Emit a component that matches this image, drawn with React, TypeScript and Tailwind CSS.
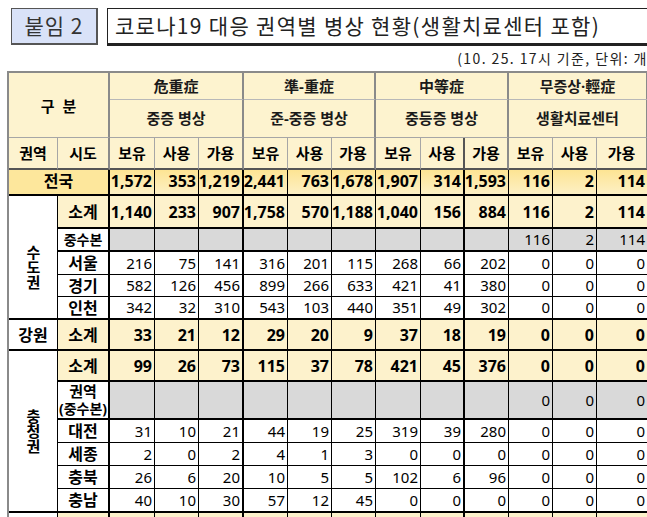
import React from 'react';

type Row = {
  label: string;
  values: string[];
  kind: 'sub' | 'hq' | 'plain';
  bottom: 'thin' | 'thick';
};

const SANS = "font-['Noto_Sans','Noto_Sans_CJK_KR',sans-serif]";

// 보유/사용/가용 x 4 groups; thick right edge after 危重症 가용 and 中等症 사용
const thickRight = (i: number) => i === 2 || i === 7;

function NumCell({ v, i, kind, bottom }: { v: string; i: number; kind: Row['kind']; bottom: Row['bottom'] }) {
  const bg = kind === 'sub' ? 'bg-[#fdf2cc]' : kind === 'hq' ? 'bg-[#d9d9d9]' : 'bg-white';
  return (
    <div
      className={[
        'flex items-center justify-end border-black pr-[2px]',
        bg,
        thickRight(i) ? 'border-r-2' : 'border-r',
        bottom === 'thick' ? 'border-b-2' : 'border-b',
        kind === 'sub' ? 'text-[16px] font-bold' : 'text-[15px]',
      ].join(' ')}
    >
      {v}
    </div>
  );
}

function LabelCell({ children, kind, bottom }: { children: React.ReactNode; kind: Row['kind']; bottom: Row['bottom'] }) {
  return (
    <div
      className={[
        'flex flex-col items-center justify-center border-r-2 border-black text-center font-bold',
        kind === 'sub' ? 'bg-[#fdf2cc]' : 'bg-white',
        kind === 'hq' ? 'leading-[18px]' : 'text-[16px]',
        bottom === 'thick' ? 'border-b-2' : 'border-b',
      ].join(' ')}
    >
      {children}
    </div>
  );
}

function Rows({ rows }: { rows: Row[] }) {
  return (
    <>
      {rows.map((r, ri) => (
        <React.Fragment key={ri}>
          <LabelCell kind={r.kind} bottom={r.bottom}>
            {r.label.split('\n').map((l, k) => (
              <span
                key={k}
                className={r.kind === 'hq' ? (l.startsWith('(') || l === '중수본' ? 'text-[14px] whitespace-nowrap' : 'text-[15px]') : ''}
              >
                {l}
              </span>
            ))}
          </LabelCell>
          {r.values.map((v, i) => (
            <NumCell key={i} v={v} i={i} kind={r.kind} bottom={r.bottom} />
          ))}
        </React.Fragment>
      ))}
    </>
  );
}

const blank9 = ['', '', '', '', '', '', '', '', ''];

const capital: Row[] = [
  { label: '소계', kind: 'sub', bottom: 'thick', values: ['1,140', '233', '907', '1,758', '570', '1,188', '1,040', '156', '884', '116', '2', '114'] },
  { label: '중수본', kind: 'hq', bottom: 'thick', values: [...blank9, '116', '2', '114'] },
  { label: '서울', kind: 'plain', bottom: 'thin', values: ['216', '75', '141', '316', '201', '115', '268', '66', '202', '0', '0', '0'] },
  { label: '경기', kind: 'plain', bottom: 'thin', values: ['582', '126', '456', '899', '266', '633', '421', '41', '380', '0', '0', '0'] },
  { label: '인천', kind: 'plain', bottom: 'thick', values: ['342', '32', '310', '543', '103', '440', '351', '49', '302', '0', '0', '0'] },
];

const gangwon: Row[] = [
  { label: '소계', kind: 'sub', bottom: 'thick', values: ['33', '21', '12', '29', '20', '9', '37', '18', '19', '0', '0', '0'] },
];

const chungcheong: Row[] = [
  { label: '소계', kind: 'sub', bottom: 'thick', values: ['99', '26', '73', '115', '37', '78', '421', '45', '376', '0', '0', '0'] },
  { label: '권역\n(중수본)', kind: 'hq', bottom: 'thick', values: [...blank9, '0', '0', '0'] },
  { label: '대전', kind: 'plain', bottom: 'thin', values: ['31', '10', '21', '44', '19', '25', '319', '39', '280', '0', '0', '0'] },
  { label: '세종', kind: 'plain', bottom: 'thin', values: ['2', '0', '2', '4', '1', '3', '0', '0', '0', '0', '0', '0'] },
  { label: '충북', kind: 'plain', bottom: 'thin', values: ['26', '6', '20', '10', '5', '5', '102', '6', '96', '0', '0', '0'] },
  { label: '충남', kind: 'plain', bottom: 'thick', values: ['40', '10', '30', '57', '12', '45', '0', '0', '0', '0', '0', '0'] },
];

const total = ['1,572', '353', '1,219', '2,441', '763', '1,678', '1,907', '314', '1,593', '116', '2', '114'];

const groups = [
  { hanja: '危重症', ko: '중증 병상' },
  { hanja: '準-重症', ko: '준-중증 병상' },
  { hanja: '中等症', ko: '중등증 병상' },
  { hanja: '무증상·輕症', ko: '생활치료센터' },
];

// region name written top-to-bottom, one syllable per line
function Vertical({ text }: { text: string }) {
  return (
    <span className="text-[15px] leading-[20px] font-['Noto_Sans_CJK_KR',sans-serif] [text-orientation:upright] [writing-mode:vertical-lr]">
      {text}
    </span>
  );
}

export default function App() {
  return (
    <div className={`h-[517px] w-[647px] overflow-hidden bg-white text-black ${SANS}`}>
      {/* title */}
      <div className="flex gap-[9px] pl-[11px] pt-[8px]">
        <div className="flex h-[37px] w-[87px] items-center justify-center border border-[#555] border-b-2 border-r-2 bg-[#d9e2f8] text-[21px] tracking-[1px] text-[#333] font-['Noto_Sans_CJK_KR',sans-serif]">
          붙임 2
        </div>
        <div className="mr-[-30px] flex h-[38px] flex-1 items-center border border-b-[3px] border-[#222] pl-[7px] text-[21px] tracking-[1.3px] whitespace-nowrap text-[#222] font-['Noto_Sans_CJK_KR',sans-serif]">
          코로나19 대응 권역별 병상 현황(생활치료센터 포함)
        </div>
      </div>
      <div className="mr-[-7px] mt-[2px] flex h-[20px] items-center justify-end whitespace-nowrap text-[14px] tracking-[1.4px] text-[#222] font-['Noto_Sans_CJK_KR',sans-serif]">
        (10. 25. 17시 기준, 단위: 개)
      </div>

      {/* table */}
      <div className="ml-[7px] mt-[3px] w-[641px] border-l-2 border-t-2 border-[#8a8a8a]">
        <div className="grid grid-cols-[49px_52px_45px_44px_45px_44px_44px_44px_45px_44px_44px_44px_44px_51px] grid-rows-[27px_38px_32px_26px_33px_23px_23px_22px_23px_31px_31px_38px_23px_23px_23px_24px_32px]">
          {/* header row 1-2 */}
          <div className="col-span-2 row-span-2 flex items-center justify-center gap-[8px] border-b border-r-2 border-b-[#a6a6a6] border-r-[#8a8a8a] bg-[#fdf3cf] pt-[2px] text-[15px] font-bold">
            <span>구</span>
            <span>분</span>
          </div>
          {groups.map((g) => (
            <div
              key={g.hanja}
              className="col-span-3 flex items-center justify-center border-b border-r-2 border-b-[#b8b8b8] border-r-[#8a8a8a] bg-[#fdf3cf] text-[15px] font-bold text-[#1a1a1a]"
            >
              {g.hanja}
            </div>
          ))}
          {groups.map((g) => (
            <div
              key={g.ko}
              className="col-span-3 flex items-center justify-center border-b border-r-2 border-b-[#a6a6a6] border-r-[#8a8a8a] bg-[#fdf3cf] text-[15px] font-bold text-[#1a1a1a]"
            >
              {g.ko}
            </div>
          ))}
          {/* header row 3 */}
          <div className="flex items-center justify-center border-b-2 border-r border-b-[#555] border-r-[#a6a6a6] bg-[#fdf3cf] text-[15px] font-bold">
            권역
          </div>
          <div className="flex items-center justify-center border-b-2 border-r-2 border-b-[#555] border-r-[#8a8a8a] bg-[#fdf3cf] text-[15px] font-bold">
            시도
          </div>
          {groups.flatMap((g, gi) =>
            ['보유', '사용', '가용'].map((t, ti) => {
              const i = gi * 3 + ti;
              return (
                <div
                  key={g.hanja + t}
                  className={[
                    'flex items-center justify-center border-b-2 border-b-[#555] bg-[#fdf3cf] text-[15px] font-bold',
                    i === 7 ? 'border-r-2 border-r-[#555]' : ti === 2 ? 'border-r-2 border-r-[#8a8a8a]' : 'border-r border-r-[#a6a6a6]',
                  ].join(' ')}
                >
                  {t}
                </div>
              );
            }),
          )}
          {/* 전국 */}
          <div className="col-span-2 flex items-center justify-center border-b-2 border-r-2 border-black bg-[#fde79c] pb-[3px] text-[16px] font-bold">
            전국
          </div>
          {total.map((v, i) => (
            <div
              key={i}
              className={[
                'flex items-center justify-end border-b-2 border-black bg-gradient-to-b from-[#fde493] to-[#fdf0c4] pb-[3px] pr-[2px] text-[16px] font-bold',
                thickRight(i) ? 'border-r-2' : 'border-r',
              ].join(' ')}
            >
              {v}
            </div>
          ))}

          {/* 수도권 */}
          <div className="row-span-5 flex items-center justify-center border-b-2 border-r border-black bg-white pt-[20px] font-bold">
            <Vertical text="수도권" />
          </div>
          <Rows rows={capital} />

          {/* 강원 */}
          <div className="flex items-center justify-center border-b-2 border-r border-black bg-white text-[16px] font-bold">
            강원
          </div>
          <Rows rows={gangwon} />

          {/* 충청권 */}
          <div className="row-span-6 flex items-center justify-center border-b-2 border-r border-black bg-white font-bold">
            <Vertical text="충청권" />
          </div>
          <Rows rows={chungcheong} />

          {/* next region, cut off at the bottom edge */}
          <div className="border-r border-black bg-white" />
          <div className="border-r-2 border-black bg-[#fdf2cc]" />
          {total.map((_, i) => (
            <div key={i} className={['border-black bg-[#fdf2cc]', thickRight(i) ? 'border-r-2' : 'border-r'].join(' ')} />
          ))}
        </div>
      </div>
    </div>
  );
}
